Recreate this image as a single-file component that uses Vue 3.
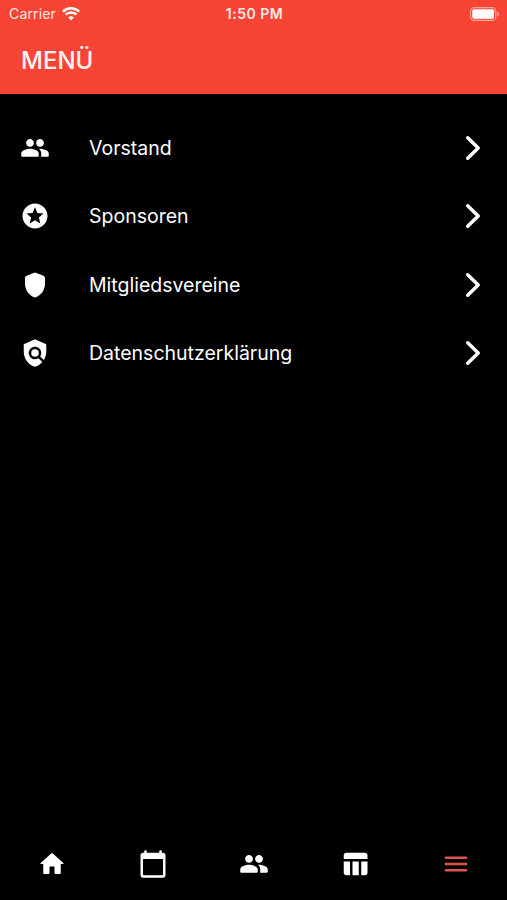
<template>
  <div class="screen">
    <header class="header">
      <div class="status-bar">
        <div class="carrier">
          <span>Carrier</span>
          <svg class="wifi" viewBox="0 0 18 14">
            <path d="M9 13.4 6.2 10.6a4 4 0 0 1 5.6 0z" />
            <path class="arc" d="M3.6 7.7a7.6 7.6 0 0 1 10.8 0M1 4.6a11.3 11.3 0 0 1 16 0" />
          </svg>
        </div>
        <span class="clock">1:50 PM</span>
        <svg class="battery" viewBox="0 0 30 14">
          <rect class="battery-case" x="0.6" y="0.6" width="25.2" height="12.8" rx="3.6" />
          <rect x="2.3" y="2.3" width="21.8" height="9.4" rx="2" />
          <path class="battery-tip" d="M27.2 4.7c2.4.7 2.4 3.9 0 4.6z" />
        </svg>
      </div>
      <h1>MENÜ</h1>
    </header>

    <main class="menu">
      <a v-for="item in items" :key="item.label" class="menu-item">
        <svg class="icon" viewBox="0 0 24 24">
          <path :d="icons[item.icon]" />
        </svg>
        <span class="label">{{ item.label }}</span>
        <svg class="chevron" viewBox="0 0 16 26">
          <path d="M2.7 2.8 13.2 13 2.7 23.2" />
        </svg>
      </a>
    </main>

    <nav class="tab-bar">
      <a v-for="tab in tabs" :key="tab" class="tab" :class="{ active: tab === activeTab }">
        <svg class="icon" viewBox="0 0 24 24">
          <path :d="icons[tab]" />
        </svg>
      </a>
    </nav>
  </div>
</template>

<script setup>
import { ref } from 'vue'

const icons = {
  people:
    'M16 11c1.7 0 3.1-1.4 3.1-3.1S17.7 4.8 16 4.8s-3.1 1.4-3.1 3.1S14.3 11 16 11zm-8 0c1.7 0 3.1-1.4 3.1-3.1S9.7 4.8 8 4.8 4.9 6.2 4.9 7.9 6.3 11 8 11zm0 1.6c-2.33 0-7 1.17-7 3.7v1.7c0 .55.45 1 1 1h12c.55 0 1-.45 1-1v-1.7c0-2.53-4.67-3.7-7-3.7zm8 0c-.29 0-.62.02-.97.05.02.01.03.03.04.04 1.14.83 1.93 2.04 1.93 3.61v1.7c0 .35-.07.69-.18 1H22c.55 0 1-.45 1-1v-1.7c0-2.53-4.67-3.7-7-3.7z',
  stars:
    'M11.99 2C6.47 2 2 6.48 2 12s4.47 10 9.99 10C17.52 22 22 17.52 22 12S17.52 2 11.99 2zm4.24 16L12 15.45 7.77 18l1.12-4.81-3.73-3.23 4.92-.42L12 5l1.92 4.53 4.92.42-3.73 3.23L16.23 18z',
  shield:
    'M11.3 2.26l-6 2.25C4.52 4.81 4 5.55 4 6.39v4.7c0 5.05 3.41 9.76 8 10.91 4.59-1.15 8-5.86 8-10.91v-4.7c0-.83-.52-1.58-1.3-1.87l-6-2.25a2 2 0 0 0-1.4-.01z',
  policy:
    'M21 5l-9-4-9 4v6c0 5.55 3.84 10.74 9 12 2.3-.56 4.33-1.9 5.88-3.71l-3.12-3.12c-1.94 1.29-4.58 1.07-6.29-.64-1.95-1.95-1.95-5.12 0-7.07 1.95-1.95 5.12-1.95 7.07 0 1.71 1.71 1.92 4.35.64 6.29l2.9 2.9C20.29 15.69 21 13.38 21 11V5zM12 9a3 3 0 1 0 0 6 3 3 0 0 0 0-6z',
  home:
    'M10 19v-5h4v5c0 .55.45 1 1 1h3c.55 0 1-.45 1-1v-7h1.7c.46 0 .68-.57.33-.87L12.67 3.6c-.38-.34-.96-.34-1.34 0l-8.36 7.53c-.34.3-.13.87.33.87H5v7c0 .55.45 1 1 1h3c.55 0 1-.45 1-1z',
  calendar:
    'M20 3h-1V2c0-.55-.45-1-1-1s-1 .45-1 1v1H7V2c0-.55-.45-1-1-1s-1 .45-1 1v1H4c-1.1 0-2 .9-2 2v16c0 1.1.9 2 2 2h16c1.1 0 2-.9 2-2V5c0-1.1-.9-2-2-2zm-1 18H5c-.55 0-1-.45-1-1V8h16v12c0 .55-.45 1-1 1z',
  table:
    'M10 10.02h5V21h-5zM17 21h3c1.1 0 2-.9 2-2v-9h-5v11zm3-18H5c-1.1 0-2 .9-2 2v3h19V5c0-1.1-.9-2-2-2zM3 19c0 1.1.9 2 2 2h3V10H3v9z',
  menu:
    'M4 18h16c.55 0 1-.45 1-1s-.45-1-1-1H4c-.55 0-1 .45-1 1s.45 1 1 1zm0-5h16c.55 0 1-.45 1-1s-.45-1-1-1H4c-.55 0-1 .45-1 1s.45 1 1 1zM3 7c0 .55.45 1 1 1h16c.55 0 1-.45 1-1s-.45-1-1-1H4c-.55 0-1 .45-1 1z'
}

const items = [
  { label: 'Vorstand', icon: 'people' },
  { label: 'Sponsoren', icon: 'stars' },
  { label: 'Mitgliedsvereine', icon: 'shield' },
  { label: 'Datenschutzerklärung', icon: 'policy' }
]

const tabs = ['home', 'calendar', 'people', 'table', 'menu']
const activeTab = ref('menu')
</script>

<style>
body {
  margin: 0;
  background: #000;
}
</style>

<style scoped>
.screen {
  display: flex;
  flex-direction: column;
  height: 900px;
  background: #000;
  color: #fff;
  font-family: Inter, 'Liberation Sans', sans-serif;
}

.header {
  box-sizing: border-box;
  height: 94px;
  background: #f84435;
}

.status-bar {
  display: grid;
  grid-template-columns: 1fr auto 1fr;
  align-items: center;
  height: 27px;
  padding: 0 7px 0 9px;
  font-size: 14px;
  color: #ffe9e6;
}

.carrier {
  display: flex;
  align-items: center;
  gap: 6px;
  letter-spacing: 0.15px;
}

.wifi {
  width: 18px;
  height: 14px;
  fill: #fff;
}

.arc {
  fill: none;
  stroke: #fff;
  stroke-width: 2.5;
}

.clock {
  font-weight: 600;
  letter-spacing: 0.5px;
}

.battery {
  justify-self: end;
  width: 30px;
  height: 14px;
  fill: #fff;
}

.battery-case {
  fill: none;
  stroke: #fca59d;
  stroke-width: 1.1;
}

.battery-tip {
  fill: #fca59d;
}

h1 {
  margin: 0;
  padding: 18px 0 0 21px;
  font-size: 24px;
  line-height: 32px;
  font-weight: 500;
  color: #fff3f1;
}

.menu {
  flex: 1;
  padding-top: 19.3px;
}

.menu-item {
  display: flex;
  align-items: center;
  height: 68.5px;
  padding: 0 26px 0 20px;
}

.icon {
  width: 30px;
  height: 30px;
  fill: currentColor;
}

.label {
  flex: 1;
  margin-left: 39px;
  font-size: 19.5px;
  line-height: 28px;
}

.chevron {
  width: 16px;
  height: 26px;
  fill: none;
  stroke: #fff;
  stroke-width: 3.5;
  stroke-linecap: round;
  stroke-linejoin: round;
}

.tab-bar {
  display: flex;
  height: 71.5px;
  padding-left: 1px;
}

.tab {
  display: flex;
  flex: 1;
  justify-content: center;
  align-items: center;
}

.tab.active {
  color: #dc5450;
}
</style>
